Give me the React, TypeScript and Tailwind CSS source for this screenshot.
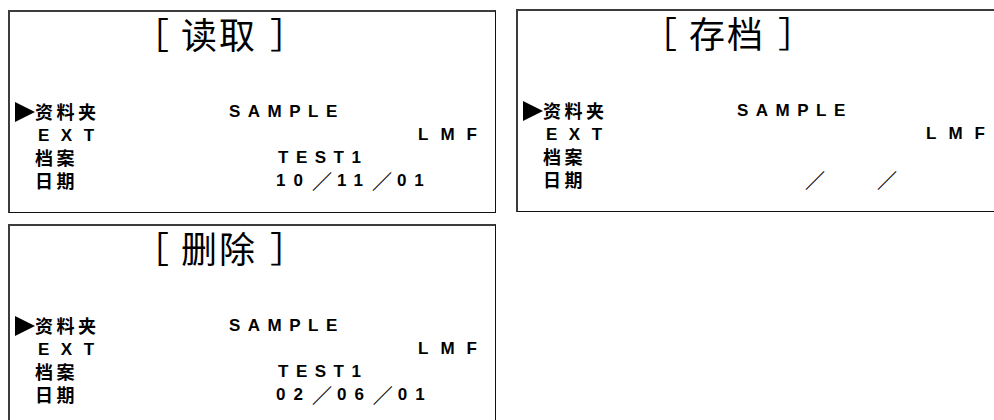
import React from "react";

interface PanelProps {
  title: [string, string];
  file: string;
  date?: [string, string, string];
  className?: string;
}

const latin = "font-['Liberation_Sans',Arial,sans-serif] text-[17px] font-bold";
const slash = "ml-[1px] font-['Noto_Sans_CJK_JP','Noto_Sans_CJK_SC',sans-serif] text-[20px] font-bold tracking-normal";

function Arrow() {
  return (
    <svg width="20" height="20" viewBox="0 0 20 20" className="shrink-0">
      <path d="M0 0 L20 10 L0 20 Z" fill="#000" />
    </svg>
  );
}

function Row({ label, children, arrow }: { label: React.ReactNode; children?: React.ReactNode; arrow?: boolean }) {
  return (
    <div className="flex h-[23px] items-center">
      <div className="w-[25px] shrink-0 pl-[5px]">{arrow && <Arrow />}</div>
      <div className="w-[191px] shrink-0 leading-[23px]">{label}</div>
      <div className="flex items-center leading-[23px] whitespace-pre">{children}</div>
    </div>
  );
}

function Panel({ title, file, date, className }: PanelProps) {
  return (
    <div
      className={
        "flex h-[203px] w-[488px] shrink-0 flex-col border-t-2 border-l-2 border-r border-b border-t-[#3c3c3c] border-l-[#3c3c3c] border-r-[#111] border-b-[#111] bg-white " +
        (className ?? "")
      }
    >
      <div className="flex pl-[123px] pt-[3px] text-[36px] font-normal leading-[36px] tracking-[2px]">
        <span>［</span>
        <span className="ml-[10px]">{title[0]}{title[1]}</span>
        <span className="ml-[13px]">］</span>
      </div>
      <div className="mt-[49px]">
        <Row label={<span className="text-[18px] font-bold tracking-[3.5px]">资料夹</span>} arrow>
          <span className={latin + " pl-[3px] tracking-[7.5px]"}>SAMPLE</span>
        </Row>
        <Row label={<span className={latin + " pl-[3px] tracking-[11.5px]"}>EXT</span>}>
          <span className={latin + " pl-[192px] tracking-[12px]"}>LMF</span>
        </Row>
        <Row label={<span className="text-[18px] font-bold tracking-[3.5px]">档案</span>}>
          <span className={latin + " pl-[52px] tracking-[7.5px]"}>{file}</span>
        </Row>
        <Row label={<span className="text-[18px] font-bold tracking-[3.5px]">日期</span>}>
          {date ? (
            <>
              <span className={latin + " pl-[50px] tracking-[8px]"}>{date[0]}</span>
              <span className={slash}>／</span>
              <span className={latin + " ml-[5px] tracking-[8px]"}>{date[1]}</span>
              <span className={slash}>／</span>
              <span className={latin + " ml-[5px] tracking-[8px]"}>{date[2]}</span>
            </>
          ) : (
            <>
              <span className={slash + " pl-[70px]"}>／</span>
              <span className={slash + " pl-[51px]"}>／</span>
            </>
          )}
        </Row>
      </div>
    </div>
  );
}

export default function App() {
  return (
    <div className="h-[420px] w-[994px] overflow-hidden bg-white pl-[8px] pt-[10px] font-['Noto_Sans_CJK_SC','Noto_Sans_CJK_JP',sans-serif] text-black">
      <div className="flex items-start gap-[20px]">
        <Panel title={["读", "取"]} file="TEST1" date={["10", "11", "01"]} />
        <Panel title={["存", "档"]} file="" className="-mt-px" />
      </div>
      <div className="mt-[11px] flex">
        <Panel title={["删", "除"]} file="TEST1" date={["02", "06", "01"]} />
      </div>
    </div>
  );
}
